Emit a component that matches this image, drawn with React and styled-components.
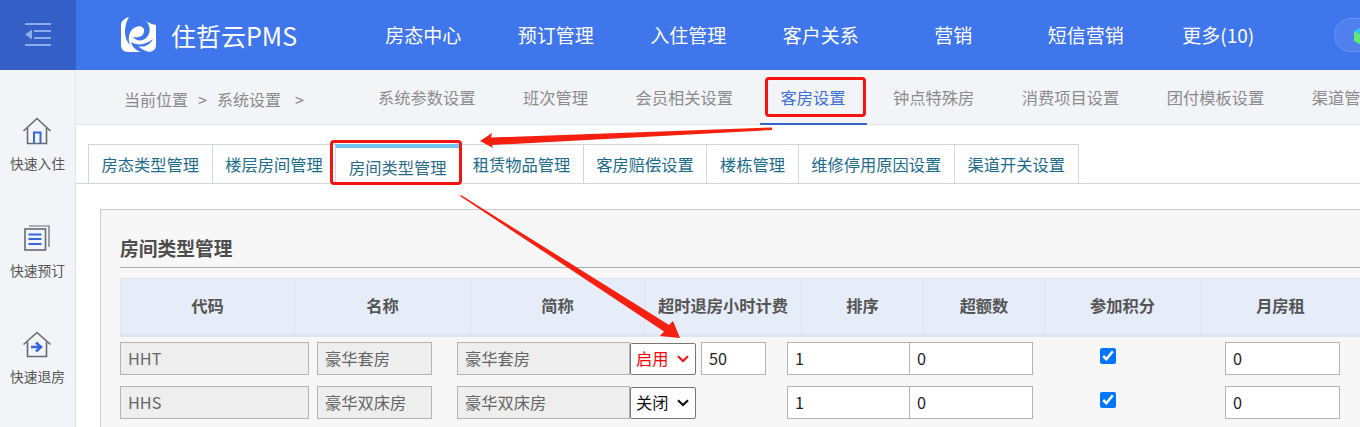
import React from 'react';
import styled, { createGlobalStyle } from 'styled-components';

const chevron = (c) =>
  `url("data:image/svg+xml,%3Csvg xmlns='http://www.w3.org/2000/svg' width='12' height='8' viewBox='0 0 12 8'%3E%3Cpath d='M1 1.2 6 6 11 1.2' fill='none' stroke='${c}' stroke-width='2.2'/%3E%3C/svg%3E")`;

const Global = createGlobalStyle`
  html, body { margin: 0; padding: 0; width: 1360px; height: 427px; overflow: hidden; background: #fff; }
  body, input, select { font-family: "Noto Sans CJK SC", "Noto Sans", sans-serif; }
  * { box-sizing: border-box; }
`;

const Page = styled.div`
  position: relative;
  width: 1360px;
  height: 427px;
  overflow: hidden;
  display: flex;
  flex-direction: column;
`;

/* top bar */
const Header = styled.header`
  height: 70px;
  flex: none;
  display: flex;
  align-items: center;
  background: #3f76ec;
  color: #fff;
`;
const Toggle = styled.div`
  width: 76px;
  height: 70px;
  flex: none;
  display: flex;
  align-items: center;
  justify-content: center;
  background: #345fc6;
`;
const Brand = styled.div`
  width: 281px;
  flex: none;
  padding-left: 44px;
  display: flex;
  align-items: center;
  gap: 14px;
  font-size: 25px;
  line-height: 36px;
  white-space: nowrap;
`;
const MainNav = styled.nav`
  display: flex;
  flex: none;
`;
const MainItem = styled.div`
  width: 132.5px;
  text-align: center;
  font-size: 19px;
  line-height: 28px;
  white-space: nowrap;
`;
const Pill = styled.div`
  margin-left: 49px;
  width: 60px;
  height: 34px;
  flex: none;
  padding: 7px 0 0 19px;
  border-radius: 17px;
  background: #4f80ee;
  border: 1px solid #6b92f0;
`;

const Body = styled.div`
  display: flex;
  flex: 1;
  min-height: 0;
`;

/* left quick links */
const Side = styled.aside`
  width: 76px;
  flex: none;
  padding-top: 44px;
  background: #f2f4f8;
  border-right: 1px solid #e2e4e8;
  display: flex;
  flex-direction: column;
  align-items: center;
`;
const Quick = styled.div`
  height: 106.5px;
  flex: none;
  display: flex;
  flex-direction: column;
  align-items: center;
`;
const QuickIcon = styled.div`
  height: 34px;
  display: flex;
  align-items: center;
`;
const QuickText = styled.div`
  margin-top: 5px;
  font-size: 13.75px;
  line-height: 20px;
  color: #555;
  white-space: nowrap;
`;

const Main = styled.main`
  flex: 1;
  min-width: 0;
  display: flex;
  flex-direction: column;
`;

/* breadcrumb with settings tabs */
const Crumbs = styled.div`
  height: 55px;
  flex: none;
  display: flex;
  background: #f2f4f8;
  border-bottom: 1px solid #e2e4e8;
  white-space: nowrap;
`;
const Trail = styled.div`
  width: 281px;
  flex: none;
  padding: 17px 0 0 48px;
  display: flex;
  font-size: 16px;
  line-height: 24px;
  color: #8a8a8a;
`;
const TrailSep = styled.span`
  margin: 0 10px 0 ${(p) => p.$left}px;
`;
const SetTabs = styled.div`
  display: flex;
  gap: 5.5px;
`;
const SetTab = styled.div`
  height: 55px;
  padding: 15px 21px 0;
  font-size: 16.25px;
  line-height: 24px;
  color: ${(p) => (p.$active ? '#3f6fd8' : '#8c8c8c')};
  border-bottom: 2px solid ${(p) => (p.$active ? '#3463cc' : 'transparent')};
`;

/* second row of tabs */
const SubTabs = styled.div`
  margin-top: 19px;
  height: 40px;
  flex: none;
  padding-left: 13px;
  display: flex;
  align-items: flex-start;
  border-bottom: 1px solid #d2d8dc;
  white-space: nowrap;
`;
const SubTab = styled.div`
  height: ${(p) => (p.$active ? 40 : 39)}px;
  padding: 6px 12.6px 0;
  margin-left: -1px;
  font-size: 16.25px;
  line-height: 26px;
  color: ${(p) => (p.$active ? '#2b6b88' : '#1d6c8c')};
  background: #fff;
  border: 1px solid #d2d8dc;
  border-bottom: none;
  border-top: ${(p) => (p.$active ? '4px solid #6cc6f0' : '1px solid #d2d8dc')};
`;

/* the settings panel */
const Panel = styled.section`
  margin: 25px 0 0 24px;
  flex: 1;
  width: 1300px;
  padding: 0 19px;
  background: #f7f7f7;
  border: 1px solid #ccc;
  border-bottom: none;
`;
const PanelTitle = styled.h2`
  margin: 23px 0 0;
  height: 35px;
  font-size: 18.75px;
  line-height: 30px;
  font-weight: 700;
  color: #4d4d4d;
  border-bottom: 1px solid #acacac;
`;
const HeadRow = styled.div`
  margin-top: 10px;
  height: 59px;
  display: grid;
  grid-template-columns: 174px 176px 174px 157px 122px 121px 156px 160px;
  background: #e6ecf8;
  border: 1px solid #dde5f2;
  border-bottom-width: 3px;
`;
const HeadCell = styled.div`
  display: flex;
  align-items: center;
  justify-content: center;
  padding-bottom: 4px;
  font-size: 16.25px;
  font-weight: 700;
  color: #555;
  white-space: nowrap;
  border-right: 1px solid #dde5f2;
`;
const Row = styled.div`
  margin-top: ${(p) => p.$top}px;
  height: 33px;
  display: flex;
  align-items: center;
`;
const Field = styled.input`
  width: ${(p) => p.$w}px;
  height: 33px;
  margin: 0 0 0 ${(p) => p.$left || 0}px;
  padding: 0 7px 2px;
  flex: none;
  font-size: 16.25px;
  color: ${(p) => (p.disabled ? '#666' : '#222')};
  background: ${(p) => (p.disabled ? '#eeeeee' : '#fff')};
  border: 1px solid #b3b3b3;
  border-radius: 0;
  outline: none;
  opacity: 1;
`;
const Toggler = styled.select`
  appearance: none;
  width: 66px;
  height: 32px;
  margin: 0;
  padding: 0 0 2px 5px;
  flex: none;
  font-size: 16.25px;
  color: ${(p) => (p.$on ? '#ff0000' : '#111')};
  background: #fff ${(p) => chevron(p.$on ? '%23f01414' : '%23111')} no-repeat right 6px center;
  border: 1px solid #767676;
  border-radius: 2px;
`;
const CheckCell = styled.div`
  width: 150px;
  flex: none;
  display: flex;
  justify-content: center;
`;
const Check = styled.input`
  width: 16px;
  height: 16px;
  margin: 0 0 6px;
`;
const Spacer = styled.div`
  width: ${(p) => p.$w}px;
  flex: none;
`;

/* hand drawn marks lying over the screenshot */
const Mark = styled.div`
  position: absolute;
  left: ${(p) => p.$x}px;
  top: ${(p) => p.$y}px;
  width: ${(p) => p.$w}px;
  height: ${(p) => p.$h}px;
  border: 3px solid #f5140f;
  border-radius: 4px;
  pointer-events: none;
`;
const Arrows = styled.svg`
  position: absolute;
  left: 0;
  top: 0;
  pointer-events: none;
`;

const MenuIcon = () => (
  <svg width="28" height="24" viewBox="0 0 28 24" fill="#8fabec">
    <rect x="1" y="0" width="26" height="2" />
    <path d="M1 11.5 8 6.5V16.5Z" />
    <rect x="10" y="7" width="17" height="2" />
    <rect x="10" y="14" width="17" height="2" />
    <rect x="1" y="21" width="26" height="2" />
  </svg>
);

const Logo = () => (
  <svg width="37" height="37" viewBox="0 0 37 37">
    <path fill="#fff" d="M9 0C5 1 1 4 1 8V28Q1 35 8 35H28Q36 35 36 28V8C30 7 25 4 22 0Z" />
    <path
      fill="#3f76ec"
      d="M9 0H22C30 6 32 14 27 20C23 25 16 24 13 20C17 21 23 20 24 15C25 10 20 8 16 10C10 12 7 20 10 28C4 22 3 10 9 0Z"
    />
    <path fill="#3f76ec" d="M11 25C17 29 26 28 33 22C30 28 24 31 18 29C21 32 25 34 29 35H21C15 33 12 29 11 25Z" />
  </svg>
);

const CheckInIcon = () => (
  <svg width="30" height="28" viewBox="0 0 30 28" fill="none">
    <path d="M1.5 14 15 1.5 28.5 14" stroke="#666a73" strokeWidth="1.6" />
    <path d="M5.5 11V26.5H24.5V11" stroke="#666a73" strokeWidth="1.6" />
    <path d="M12 26V15.5H18.5V26" stroke="#3568dc" strokeWidth="2" />
  </svg>
);
const BookIcon = () => (
  <svg width="26" height="26" viewBox="0 0 26 26" fill="none">
    <path d="M5 1H25V22" stroke="#666a73" strokeWidth="1.2" />
    <rect x="1" y="4" width="20.5" height="21" stroke="#666a73" strokeWidth="1.6" />
    <path d="M4.5 9.5H17.5M4.5 14H17.5M4.5 19H17.5" stroke="#3568dc" strokeWidth="2" />
  </svg>
);
const CheckOutIcon = () => (
  <svg width="30" height="27" viewBox="0 0 30 27" fill="none">
    <path d="M1.5 13.5 15 1.5 28.5 13.5" stroke="#666a73" strokeWidth="1.6" />
    <path d="M5.5 11V25.5H24.5V11" stroke="#666a73" strokeWidth="1.6" />
    <path d="M9 16H17M14 11.5 19 16 14 20.5" stroke="#3568dc" strokeWidth="2.6" />
  </svg>
);
const Cube = () => (
  <svg width="20" height="20" viewBox="0 0 20 20">
    <path fill="#2fc4f5" d="M0 5 9 0 18 5 9 10Z" />
    <path fill="#5fe874" d="M0 5 9 10V20L0 15Z" />
    <path fill="#8ee8a0" d="M18 5 9 10V20L18 15Z" />
  </svg>
);

const navItems = ['房态中心', '预订管理', '入住管理', '客户关系', '营销', '短信营销', '更多(10)'];
const settingTabs = ['系统参数设置', '班次管理', '会员相关设置', '客房设置', '钟点特殊房', '消费项目设置', '团付模板设置', '渠道管理'];
const subTabs = ['房态类型管理', '楼层房间管理', '房间类型管理', '租赁物品管理', '客房赔偿设置', '楼栋管理', '维修停用原因设置', '渠道开关设置'];
const columns = ['代码', '名称', '简称', '超时退房小时计费', '排序', '超额数', '参加积分', '月房租'];

function RoomRow({ top, code, name, on, fee }) {
  return (
    <Row $top={top}>
      <Field $w={189} disabled defaultValue={code} />
      <Field $w={115} $left={8} disabled defaultValue={name} />
      <Field $w={173} $left={25} disabled defaultValue={name} />
      <Toggler $on={on} defaultValue={on ? '启用' : '关闭'}>
        <option>启用</option>
        <option>关闭</option>
      </Toggler>
      {fee ? <Field $w={65} $left={5} defaultValue={fee} /> : <Spacer $w={70} />}
      <Field $w={123} $left={21} defaultValue="1" />
      <Field $w={124} $left={-1} defaultValue="0" />
      <CheckCell>
        <Check type="checkbox" defaultChecked />
      </CheckCell>
      <Field $w={115} $left={42} defaultValue="0" />
    </Row>
  );
}

export default function App() {
  return (
    <Page>
      <Global />
      <Header>
        <Toggle>
          <MenuIcon />
        </Toggle>
        <Brand>
          <Logo />
          <span>住哲云PMS</span>
        </Brand>
        <MainNav>
          {navItems.map((n) => (
            <MainItem key={n}>{n}</MainItem>
          ))}
        </MainNav>
        <Pill>
          <Cube />
        </Pill>
      </Header>
      <Body>
        <Side>
          <Quick>
            <QuickIcon><CheckInIcon /></QuickIcon>
            <QuickText>快速入住</QuickText>
          </Quick>
          <Quick>
            <QuickIcon><BookIcon /></QuickIcon>
            <QuickText>快速预订</QuickText>
          </Quick>
          <Quick>
            <QuickIcon><CheckOutIcon /></QuickIcon>
            <QuickText>快速退房</QuickText>
          </Quick>
        </Side>
        <Main>
          <Crumbs>
            <Trail>
              当前位置
              <TrailSep $left={10}>&gt;</TrailSep>
              系统设置
              <TrailSep $left={14}>&gt;</TrailSep>
            </Trail>
            <SetTabs>
              {settingTabs.map((t) => (
                <SetTab key={t} $active={t === '客房设置'}>{t}</SetTab>
              ))}
            </SetTabs>
          </Crumbs>
          <SubTabs>
            {subTabs.map((t) => (
              <SubTab key={t} $active={t === '房间类型管理'}>{t}</SubTab>
            ))}
          </SubTabs>
          <Panel>
            <PanelTitle>房间类型管理</PanelTitle>
            <HeadRow>
              {columns.map((c) => (
                <HeadCell key={c}>{c}</HeadCell>
              ))}
            </HeadRow>
            <RoomRow top={5} code="HHT" name="豪华套房" on fee="50" />
            <RoomRow top={11} code="HHS" name="豪华双床房" />
          </Panel>
        </Main>
      </Body>

      <Mark $x={765} $y={77} $w={101} $h={40} />
      <Mark $x={330} $y={140} $w={132} $h={45} />
      <Arrows width="1360" height="427" viewBox="0 0 1360 427">
        <path fill="#f5200f" d="M772 127.5 772 130 492 145 493 148 480 141 492 133 491 137.5Z" />
        <path fill="#f5200f" d="M460 196 461 195 669 325 673 321 680 338 660 336 664 331.5Z" />
      </Arrows>
    </Page>
  );
}
